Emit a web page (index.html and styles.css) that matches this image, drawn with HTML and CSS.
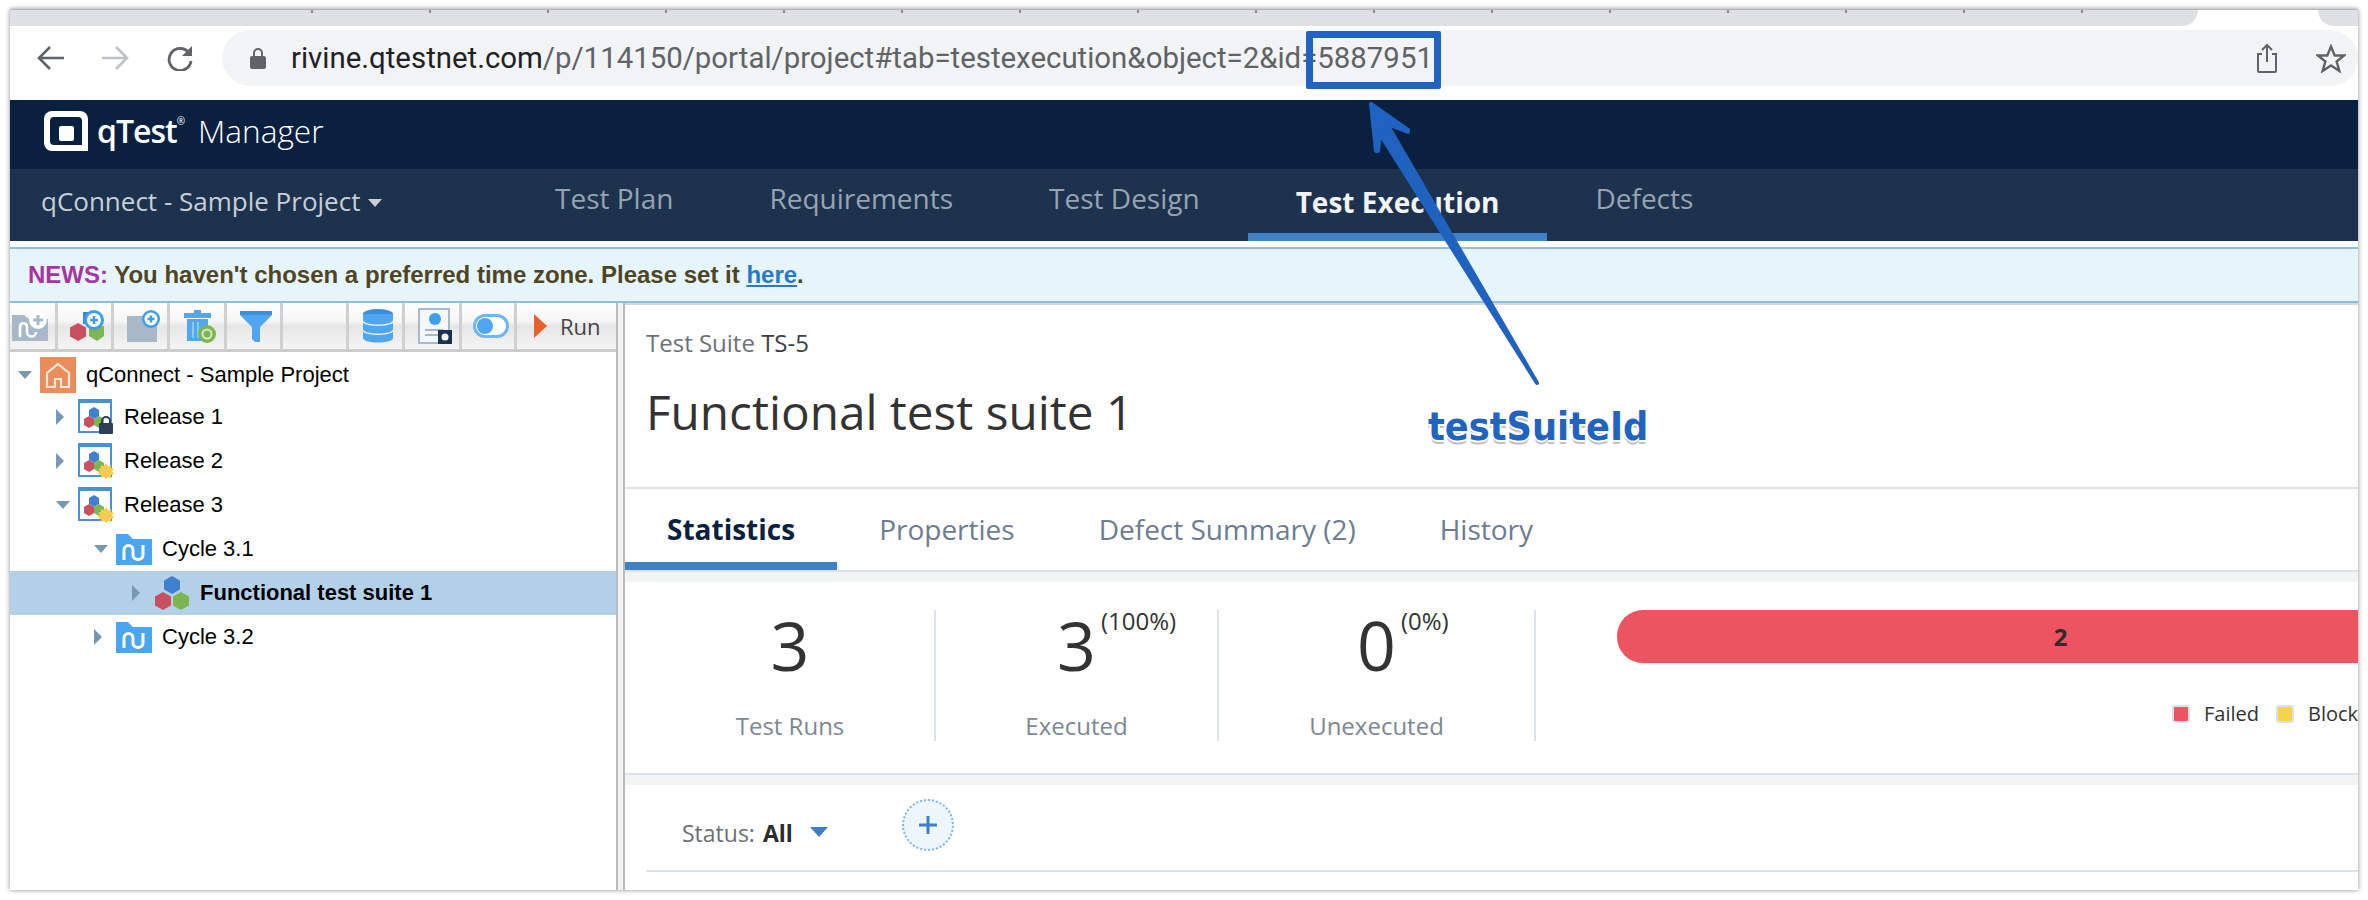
FILE: index.html
```html
<!DOCTYPE html>
<html lang="en">
<head>
    <meta charset="UTF-8">
    <title>qTest Manager</title>
    <link rel="stylesheet" href="styles.css">
</head>
<body>

<svg class="sprites" width="0" height="0">
    <symbol id="hexes" viewBox="0 0 36 36">
        <path d="M18 1l8 4.500v9L18 19l-8-4.500v-9z" fill="#3f80d0"/>
        <path d="M9 17l8 4.500v9L9 35l-8-4.500v-9z" fill="#c9515f"/>
        <path d="M27 17l8 4.500v9L27 35l-8-4.500v-9z" fill="#7db552"/>
    </symbol>
    <symbol id="release" viewBox="0 0 36 36">
        <rect x="1" y="1" width="32" height="32" fill="#fff" stroke="#4a90d9" stroke-width="2"/>
        <rect x="0" y="0" width="34" height="4" fill="#4a90d9"/>
        <path d="M16 8l5 3v6l-5 3-5-3v-6z" fill="#3f80d0"/>
        <path d="M11 17l5 3v6l-5 3-5-3v-6z" fill="#c9515f"/>
        <path d="M21 17l5 3v6l-5 3-5-3v-6z" fill="#7db552"/>
    </symbol>
    <symbol id="folder" viewBox="0 0 36 31">
        <path d="M0 0h12l5 5h19v26H0z" fill="#4ba6f0"/>
        <path d="M8 26V16c0-6 9-6 9 0v5c0 6 10 6 10 0V11" fill="none" stroke="#fff" stroke-width="3"/>
    </symbol>
    <symbol id="gear" viewBox="0 0 16 16">
        <path d="M8 0l2 3 3-1 0 3 3 1-2 2 2 3-3 1 0 3-3-1-2 2-2-2-3 1 0-3-3-1 2-3L0 6l3-1 0-3 3 1z" fill="#f6cc4e"/>
    </symbol>
</svg>

<div class="frame">
    <div class="tabbar">
        <div class="tabs-main"><div class="tab-ticks"></div></div>
        <div class="tabs-gap"></div>
        <div class="tabs-end"></div>
    </div>

    <div class="browser-bar">
        <svg class="nav-icon" width="28" height="26" viewBox="0 0 28 26"><path d="M27 13H3M13 2L2 13l11 11" fill="none" stroke="#5f6368" stroke-width="2.600"/></svg>
        <svg class="nav-icon" width="28" height="26" viewBox="0 0 28 26"><path d="M1 13h24M15 2l11 11-11 11" fill="none" stroke="#bdc1c6" stroke-width="2.600"/></svg>
        <svg class="nav-icon" width="30" height="26" viewBox="0 0 30 26"><path d="M24 8a11 11 0 1 0 2 8" fill="none" stroke="#5f6368" stroke-width="2.800"/><path d="M27 1v10H17z" fill="#5f6368"/></svg>
        <div class="url-pill">
            <svg class="lock" width="16" height="21" viewBox="0 0 16 21"><path d="M4 9V5a4 4 0 0 1 8 0v4" fill="none" stroke="#5f6368" stroke-width="2"/><rect y="8" width="16" height="13" rx="2" fill="#5f6368"/></svg>
            <span class="url"><span class="url-host">rivine.qtestnet.com</span>/p/114150/portal/project#tab=testexecution&amp;object=2&amp;id=5887951</span>
            <svg class="share" width="22" height="30" viewBox="0 0 22 30"><path d="M6 11H2v17a1 1 0 0 0 1 1h16a1 1 0 0 0 1-1V11h-4M11 19V2M6 7l5-5 5 5" fill="none" stroke="#5f6368" stroke-width="2"/></svg>
            <svg class="star" width="30" height="29" viewBox="0 0 30 29"><path d="M15 2.500l3.700 9h9.300l-7.400 6 2.800 9.500L15 21.500 6.600 27l2.800-9.500-7.400-6h9.300z" fill="none" stroke="#5f6368" stroke-width="2.400"/></svg>
        </div>
    </div>

    <div class="app-header">
        <svg class="logo" width="44" height="44" viewBox="0 0 44 44"><path d="M8 0h28a8 8 0 0 1 8 8v32H8a8 8 0 0 1-8-8V8a8 8 0 0 1 8-8z" fill="#fff"/><path d="M10 6h24a4 4 0 0 1 4 4v24H10a4 4 0 0 1-4-4V10a4 4 0 0 1 4-4z" fill="#0a2040"/><rect x="15" y="15" width="15" height="15" rx="2" fill="#fff"/></svg>
        <span class="brand">qTest<sup>®</sup></span>
        <span class="product">Manager</span>
    </div>

    <div class="app-nav">
        <div class="project">qConnect - Sample Project<span class="project-caret"></span></div>
        <a class="nav-tab">Test Plan</a>
        <a class="nav-tab">Requirements</a>
        <a class="nav-tab">Test Design</a>
        <a class="nav-tab active">Test Execution</a>
        <a class="nav-tab">Defects</a>
    </div>

    <div class="news"><b class="news-label">NEWS:</b> You haven't chosen a preferred time zone. Please set it <a class="news-link">here</a>.</div>

    <div class="workspace">
        <div class="left-panel">
            <div class="toolbar">
                <div class="tool w48">
                    <svg width="36" height="30" viewBox="0 0 36 30"><path d="M0 4h12l5 4h19v22H0z" fill="#a9b8c9"/><path d="M8 26V16c0-5 7-5 7 0v5c0 6 9 6 9 0" fill="none" stroke="#fff" stroke-width="2.500"/><circle cx="26" cy="9" r="9" fill="#fff"/><path d="M26 4v10M21 9h10" stroke="#a9b8c9" stroke-width="3"/></svg>
                </div>
                <div class="tool w56">
                    <svg width="36" height="32" viewBox="0 0 36 32"><path d="M14 2h8v12h-8z" fill="#3f80d0"/><path d="M9 13l8 4.500v9L9 31l-8-4.500v-9z" fill="#c9515f"/><path d="M20 16h15v10l-7 5-8-5z" fill="#7db552"/><circle cx="25" cy="10" r="10" fill="#3f9df0"/><circle cx="25" cy="10" r="7" fill="#fff"/><path d="M25 6v8M21 10h8" stroke="#3f9df0" stroke-width="2.500"/></svg>
                </div>
                <div class="tool w56">
                    <svg width="36" height="32" viewBox="0 0 36 32"><path d="M2 6h30v26H2z" fill="#a9b8c9"/><circle cx="26" cy="9" r="9" fill="#3f9df0"/><circle cx="26" cy="9" r="6.500" fill="#fff"/><path d="M26 5.500v7M22.500 9h7" stroke="#3f9df0" stroke-width="2.500"/></svg>
                </div>
                <div class="tool w57">
                    <svg width="32" height="34" viewBox="0 0 32 34"><path d="M10 1h7v3h10v5H0V4h10z" fill="#52a8ef"/><path d="M3 10h21v22H3z" fill="#52a8ef"/><path d="M9 13v16M14 13v16" stroke="#8cc6f5" stroke-width="2"/><circle cx="23" cy="25" r="9" fill="#7db552"/><circle cx="23" cy="25" r="4.500" fill="none" stroke="#d5ebc4" stroke-width="2"/></svg>
                </div>
                <div class="tool w56">
                    <svg width="32" height="32" viewBox="0 0 32 32"><path d="M0 1h32v4L20 17v15h-5L12 29V17L0 5z" fill="#4ea6f0"/><path d="M0 1h32v4H0z" fill="#3b8fdc"/></svg>
                </div>
                <div class="tool w66"></div>
                <div class="tool w56">
                    <svg width="30" height="34" viewBox="0 0 30 34"><ellipse cx="15" cy="5" rx="15" ry="5" fill="#3b8fdc"/><path d="M0 5h30v6c0 6-30 6-30 0z" fill="#4ea6f0"/><path d="M0 14c6 4 24 4 30 0v6c0 6-30 6-30 0z" fill="#4ea6f0"/><path d="M0 23c6 4 24 4 30 0v6c0 6-30 6-30 0z" fill="#4ea6f0"/></svg>
                </div>
                <div class="tool w57">
                    <svg width="34" height="36" viewBox="0 0 34 36"><path d="M1 1h30v34H1z" fill="#f4f7fb" stroke="#a9b8c9" stroke-width="2"/><circle cx="17" cy="11" r="6" fill="#3f9df0"/><path d="M7 22h18M7 27h14" stroke="#a9b8c9" stroke-width="2"/><rect x="20" y="22" width="14" height="14" fill="#1d324f"/><circle cx="27" cy="29" r="3.500" fill="#fff"/></svg>
                </div>
                <div class="tool w55">
                    <svg width="36" height="24" viewBox="0 0 36 24"><rect x="1.500" y="1.500" width="33" height="21" rx="10.500" fill="#fff" stroke="#6fb6f5" stroke-width="3"/><circle cx="12" cy="12" r="8" fill="#4ea6f0"/></svg>
                </div>
                <div class="tool tool-run"><span class="run-arrow"></span><span class="run-text">Run</span></div>
            </div>

            <div class="tree">
                <div class="tree-row root">
                    <span class="tree-caret open"></span>
                    <svg class="tree-icon" width="36" height="36" viewBox="0 0 36 36"><rect width="36" height="36" fill="#e98e5a"/><path d="M18 7l11 9v14H21v-8h-6v8H7V16z" fill="none" stroke="#fbe7da" stroke-width="2.200"/></svg>
                    <span>qConnect - Sample Project</span>
                </div>
                <div class="tree-row lvl1">
                    <span class="tree-caret"></span>
                    <svg class="tree-icon" width="36" height="36" viewBox="0 0 36 36"><use href="#release" width="36" height="36"/><path d="M24 25v-3a4 4 0 0 1 8 0v3" fill="none" stroke="#2e3f58" stroke-width="2"/><rect x="21" y="24" width="14" height="11" rx="1" fill="#2e3f58"/></svg>
                    <span>Release 1</span>
                </div>
                <div class="tree-row lvl1">
                    <span class="tree-caret"></span>
                    <svg class="tree-icon" width="36" height="36" viewBox="0 0 36 36"><use href="#release" width="36" height="36"/><use href="#gear" x="20" y="20" width="16" height="16"/></svg>
                    <span>Release 2</span>
                </div>
                <div class="tree-row lvl1">
                    <span class="tree-caret open"></span>
                    <svg class="tree-icon" width="36" height="36" viewBox="0 0 36 36"><use href="#release" width="36" height="36"/><use href="#gear" x="20" y="20" width="16" height="16"/></svg>
                    <span>Release 3</span>
                </div>
                <div class="tree-row lvl2">
                    <span class="tree-caret open"></span>
                    <svg class="tree-icon" width="36" height="31" viewBox="0 0 36 31"><use href="#folder" width="36" height="31"/></svg>
                    <span>Cycle 3.1</span>
                </div>
                <div class="tree-row lvl3 selected">
                    <span class="tree-caret"></span>
                    <svg class="tree-icon" width="36" height="36" viewBox="0 0 36 36"><use href="#hexes" width="36" height="36"/></svg>
                    <span>Functional test suite 1</span>
                </div>
                <div class="tree-row lvl2">
                    <span class="tree-caret"></span>
                    <svg class="tree-icon" width="36" height="31" viewBox="0 0 36 31"><use href="#folder" width="36" height="31"/></svg>
                    <span>Cycle 3.2</span>
                </div>
            </div>
        </div>

        <div class="splitter"></div>

        <div class="right-panel">
            <div class="suite-head">
                <div class="suite-crumb">Test Suite <span class="suite-id">TS-5</span></div>
                <h1 class="suite-title">Functional test suite 1</h1>
            </div>

            <div class="suite-tabs">
                <a class="suite-tab active">Statistics</a>
                <a class="suite-tab">Properties</a>
                <a class="suite-tab">Defect Summary (2)</a>
                <a class="suite-tab">History</a>
            </div>

            <div class="band"></div>

            <div class="stats">
                <div class="stat c1">
                    <div class="stat-num">3</div>
                    <div class="stat-label">Test Runs</div>
                </div>
                <div class="stat c2">
                    <div class="stat-num">3<span class="stat-pct">(100%)</span></div>
                    <div class="stat-label">Executed</div>
                </div>
                <div class="stat c3">
                    <div class="stat-num">0<span class="stat-pct">(0%)</span></div>
                    <div class="stat-label">Unexecuted</div>
                </div>
                <div class="chart">
                    <div class="chart-bar">2</div>
                    <div class="legend">
                        <span class="swatch red"></span><span class="legend-text">Failed</span>
                        <span class="swatch yellow"></span><span class="legend-text">Blocked</span>
                    </div>
                </div>
            </div>

            <div class="band"></div>

            <div class="filter-wrap">
                <div class="filter-bar">
                    <span class="filter-name">Status:</span> <b class="filter-value">All</b>
                    <span class="filter-caret"></span>
                    <span class="filter-add"><svg width="20" height="20" viewBox="0 0 20 20"><path d="M10 1v18M1 10h18" stroke="#3f80c4" stroke-width="3"/></svg></span>
                </div>
            </div>
        </div>
    </div>

    <!-- annotation over the screenshot -->
    <div class="mark-box"></div>
    <svg class="mark-arrow" width="2348" height="881" viewBox="10 9 2348 881">
        <path d="M1371 104L1408 130 1408 132 1387 124 1537 383 1380 134 1378 151 1376 151z" fill="#1f62bf" stroke="#1f62bf" stroke-width="4" stroke-linejoin="round"/>
    </svg>
    <div class="mark-label">testSuiteId</div>
</div>

</body>
</html>
```

FILE: styles.css
```css
* {
    margin: 0;
    padding: 0;
    box-sizing: border-box;
}

body {
    background-color: #fff;
    padding: 9px 10px 10px;
    font-family: "Open Sans", sans-serif;
    overflow: hidden;
}

.sprites {
    position: absolute;
}

.frame {
    position: relative;
    width: 2348px;
    height: 881px;
    background-color: #fff;
    border-top: 1px solid #b5b5b5;
    box-shadow: 0 0 5px rgba(0, 0, 0, 0.45);
    overflow: hidden;
}

/* browser chrome */
.tabbar {
    display: flex;
    height: 16px;
}

.tabs-main {
    width: 2188px;
    background-color: #dfe0e4;
    border-bottom-right-radius: 16px;
    padding-left: 301px;
}

.tab-ticks {
    height: 3px;
    width: 1780px;
    background: repeating-linear-gradient(90deg, #8a8a8a 0, #8a8a8a 2px, transparent 2px, transparent 118px);
}

.tabs-gap {
    width: 120px;
}

.tabs-end {
    width: 40px;
    background-color: #dfe0e4;
    border-bottom-left-radius: 16px;
}

.browser-bar {
    display: flex;
    align-items: center;
    height: 74px;
    padding-left: 27px;
    padding-bottom: 10px;
    gap: 36px;
}

.nav-icon {
    flex: none;
}

.url-pill {
    display: flex;
    align-items: center;
    flex: 1;
    height: 56px;
    margin-left: -9px;
    padding-left: 28px;
    background-color: #f1f3f4;
    border-radius: 28px;
}

.lock {
    margin-right: 25px;
}

.url {
    font-family: Roboto, sans-serif;
    font-size: 29.4px;
    color: #5f6368;
    white-space: nowrap;
}

.url-host {
    color: #202124;
}

.share {
    margin-left: auto;
    margin-right: 38px;
}

.star {
    margin-right: 12px;
}

/* app header */
.app-header {
    display: flex;
    align-items: center;
    height: 69px;
    padding: 0 0 4px 34px;
    background-color: #0a2040;
    color: #fff;
}

.brand {
    margin: 0 0 4px 9px;
    font-size: 32px;
    font-weight: 600;
    letter-spacing: -1px;
}

.brand sup {
    font-size: 10px;
    font-weight: 400;
    vertical-align: 18px;
}

.product {
    margin: 0 0 4px 14px;
    font-size: 31.6px;
    font-weight: 300;
}

.app-nav {
    display: flex;
    height: 72px;
    background-color: #1d324f;
}

.project {
    width: 497px;
    padding: 14px 0 0 31px;
    font-size: 26px;
    color: #c8ced6;
}

.project-caret {
    display: inline-block;
    margin-left: 8px;
    border: 7px solid transparent;
    border-top: 8px solid #c8ced6;
    border-bottom: 0;
    vertical-align: 4px;
}

.nav-tab {
    padding: 10px 48px 0;
    font-size: 28px;
    color: #98a3b1;
    white-space: nowrap;
}

.nav-tab.active {
    color: #f2f3f5;
    font-weight: 700;
    padding-top: 14px;
    border-bottom: 8px solid #4080c4;
}

.news {
    height: 56px;
    margin-top: 6px;
    padding: 12px 0 0 18px;
    background-color: #e5f5fb;
    border-top: 2px solid #8dbfdb;
    border-bottom: 2px solid #8dbfdb;
    font-family: "Liberation Sans", Arial, sans-serif;
    font-size: 24px;
    font-weight: 700;
    color: #4f4524;
}

.news-label {
    color: #a535a0;
}

.news-link {
    color: #2a78c8;
    text-decoration: underline;
}

/* workspace */
.workspace {
    display: flex;
    height: 587px;
}

.left-panel {
    width: 606px;
    flex: none;
}

.toolbar {
    display: flex;
    height: 49px;
    border-bottom: 3px solid #ccc;
    background: linear-gradient(#fff 0, #f5f5f5 40%, #e6e6e6 50%, #f4f4f4 100%);
}

.tool {
    display: flex;
    align-items: center;
    justify-content: center;
    padding-left: 5px;
    border-right: 3px solid #d0d0d0;
}

.w48 { width: 48px; padding-left: 0; padding-right: 5px; }
.w55 { width: 55px; }
.w56 { width: 56px; }
.w57 { width: 57px; }
.w66 { width: 66px; }

.tool-run {
    flex: 1;
    justify-content: flex-start;
    padding-left: 17px;
    border-right: 0;
}

.run-arrow {
    border-left: 13px solid #e5622e;
    border-top: 12px solid transparent;
    border-bottom: 12px solid transparent;
}

.run-text {
    margin-left: 13px;
    font-size: 22px;
    color: #444;
}

.tree {
    padding-top: 3px;
    font-family: "Liberation Sans", Arial, sans-serif;
    font-size: 22px;
    color: #000;
}

.tree-row {
    display: flex;
    align-items: center;
    height: 44px;
    white-space: nowrap;
}

.tree-row.root {
    height: 40px;
    padding-left: 8px;
}

.tree-row.lvl1 { padding-left: 46px; }
.tree-row.lvl2 { padding-left: 84px; }
.tree-row.lvl3 { padding-left: 122px; }

.tree-row.selected {
    background-color: #b3d0e9;
    font-weight: 700;
}

.tree-caret {
    flex: none;
    width: 8px;
    height: 0;
    margin-right: 14px;
    border-left: 8px solid #7698b0;
    border-top: 8px solid transparent;
    border-bottom: 8px solid transparent;
}

.tree-caret.open {
    width: 14px;
    margin-right: 8px;
    border-left: 7px solid transparent;
    border-right: 7px solid transparent;
    border-top: 8px solid #7698b0;
    border-bottom: 0;
}

.tree-icon {
    flex: none;
    margin-right: 10px;
}

.splitter {
    width: 9px;
    flex: none;
    background-color: #f2f2f2;
    border-left: 2px solid #bbb;
    border-right: 2px solid #bbb;
}

.right-panel {
    flex: 1;
    min-width: 0;
}

.suite-head {
    height: 186px;
    padding: 21px 0 0 21px;
    border-top: 2px solid #d8d8d8;
    border-bottom: 2px solid #dde2e8;
}

.suite-crumb {
    font-size: 24px;
    color: #6b7078;
}

.suite-id {
    color: #3a3f45;
}

.suite-title {
    margin-top: 20px;
    font-size: 47.7px;
    font-weight: 400;
    color: #333;
}

.suite-tabs {
    display: flex;
    height: 83px;
    border-bottom: 2px solid #dde2e8;
}

.suite-tab {
    padding: 21px 42px 0;
    font-size: 28px;
    color: #6e7c91;
    white-space: nowrap;
}

.suite-tab.active {
    color: #0a2040;
    font-weight: 700;
    border-bottom: 8px solid #4080c4;
}

.band {
    height: 10px;
    background-color: #f2f3f3;
}

.stats {
    display: grid;
    grid-template-columns: 290px 283px 317px 1fr;
    height: 193px;
    padding: 28px 0 0 21px;
    border-bottom: 2px solid #dde2e8;
    overflow: hidden;
}

.stat {
    height: 131px;
    border-right: 2px solid #dde2e8;
    text-align: center;
}

.stat-num {
    position: relative;
    display: inline-block;
    font-size: 68px;
    font-weight: 400;
    line-height: 70px;
    color: #333;
}

.stat-pct {
    position: absolute;
    left: calc(100% + 5px);
    top: -4px;
    font-size: 24px;
    line-height: 30px;
}

.stat-label {
    margin-top: 29px;
    font-size: 24px;
    color: #7c8794;
}

.chart {
    padding-left: 81px;
    min-width: 0;
}

.chart-bar {
    width: 887px;
    height: 53px;
    line-height: 53px;
    background-color: #ec5461;
    border-radius: 26px 0 0 26px;
    text-align: center;
    font-size: 24px;
    font-weight: 700;
    color: #2c2c2c;
}

.legend {
    display: flex;
    align-items: center;
    margin-top: 37px;
    padding-left: 555px;
    font-size: 20px;
    color: #333;
    white-space: nowrap;
}

.swatch {
    width: 18px;
    height: 18px;
    flex: none;
    border: 2px solid #dde2e8;
    border-radius: 3px;
}

.swatch.red { background-color: #ec5461; }
.swatch.yellow { background-color: #f5d44a; margin-left: 17px; }

.legend-text {
    margin-left: 14px;
}

.filter-wrap {
    padding-left: 21px;
}

.filter-bar {
    display: flex;
    align-items: center;
    height: 87px;
    padding: 10px 0 0 36px;
    border-bottom: 2px solid #dde2e8;
    font-size: 23px;
}

.filter-name {
    color: #6b7078;
    margin-right: 8px;
}

.filter-value {
    color: #2c2c2c;
}

.filter-caret {
    margin: 0 0 2px 17px;
    border-left: 9px solid transparent;
    border-right: 9px solid transparent;
    border-top: 10px solid #3f80c4;
}

.filter-add {
    display: flex;
    align-items: center;
    justify-content: center;
    width: 52px;
    height: 52px;
    margin: 0 0 15px 74px;
    background-color: #eef6fd;
    border: 2px dotted #7fb3e0;
    border-radius: 50%;
}

/* annotation */
.mark-box {
    position: absolute;
    left: 1296px;
    top: 21px;
    width: 135px;
    height: 58px;
    border: 7px solid #2163c0;
    border-radius: 2px;
}

.mark-arrow {
    position: absolute;
    left: 0;
    top: -1px;
}

.mark-label {
    position: absolute;
    left: 1418px;
    top: 394px;
    font-family: "DejaVu Sans", sans-serif;
    font-size: 39.2px;
    font-stretch: condensed;
    font-weight: 700;
    color: #2163c0;
    text-shadow: 2px 0 0 #fff, -2px 0 0 #fff, 0 -2px 0 #fff, 0 2px 0 #fff, 0 4px 1px #bbb;
}
```
